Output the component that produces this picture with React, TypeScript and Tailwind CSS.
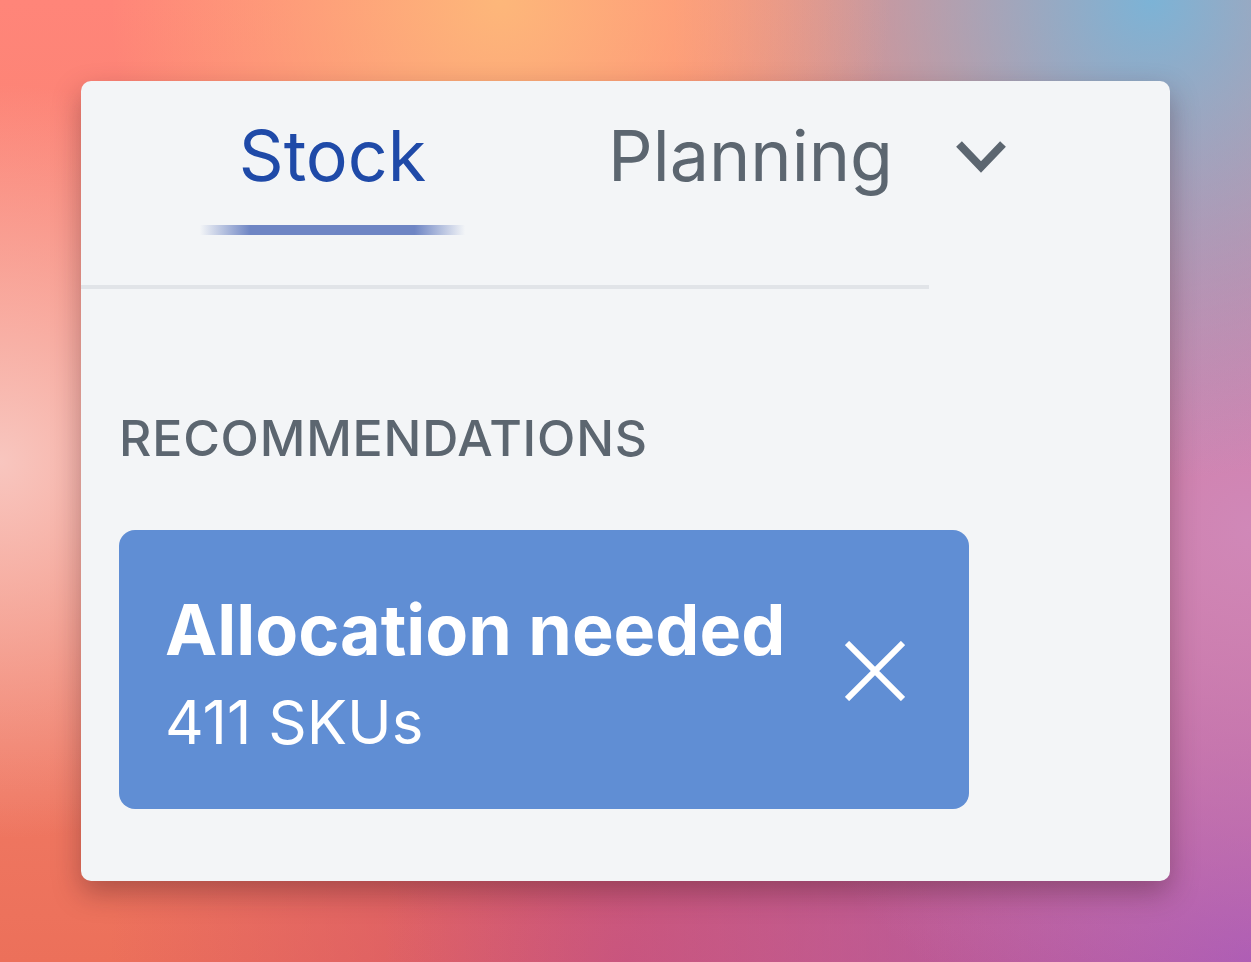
import React from "react";

function Chevron() {
  return (
    <svg width="52" height="34" viewBox="0 0 52 34" fill="none" aria-hidden>
      <path d="M4 4 L26 27 L48 4" stroke="#5c6670" strokeWidth="8" />
    </svg>
  );
}

function CloseIcon() {
  return (
    <svg width="60" height="60" viewBox="0 0 60 60" fill="none" aria-hidden>
      <path d="M2 2 L58 58 M58 2 L2 58" stroke="#ffffff" strokeWidth="6" />
    </svg>
  );
}

export default function App() {
  return (
    <div
      className="w-[1251px] h-[962px] overflow-hidden pt-[81px] pl-[81px] bg-[radial-gradient(circle_at_40%_0%,#fdb77a_0,transparent_32%),radial-gradient(circle_at_92%_0%,#7cb3d6_0,transparent_32%),radial-gradient(circle_at_0%_48%,#f8c6bf_0,transparent_28%),radial-gradient(circle_at_100%_55%,#d088b8_0,transparent_40%),radial-gradient(circle_at_100%_100%,#a653b4_0,transparent_55%),radial-gradient(circle_at_50%_100%,#d6566a_0,transparent_45%),linear-gradient(180deg,#ff8579_0%,#f3806a_60%,#ec705a_100%)]"
      style={{ fontFamily: "Inter, 'Noto Sans', sans-serif" }}
    >
      <div className="w-[1089px] h-[800px] rounded-[10px] bg-[#f3f5f7] shadow-[0_12px_28px_rgba(60,20,30,0.35)]">
        {/* Tabs */}
        <div className="w-[848px] border-b-4 border-[#e1e4e8]">
          <div className="flex items-start pl-[119px] pt-[40px]">
            <div className="w-[265px] flex flex-col items-center">
              <span className="text-[70px] leading-[70px] text-[#1f4aa8]">Stock</span>
              <div className="mt-[34px] h-[10px] w-[265px] bg-[linear-gradient(90deg,rgba(110,133,196,0)_0%,#6e85c4_19%,#6e85c4_81%,rgba(110,133,196,0)_100%)]" />
            </div>
            <span className="ml-[143px] text-[70px] leading-[70px] text-[#5c6670]">Planning</span>
            <div className="ml-[62px] mt-[19px]">
              <Chevron />
            </div>
          </div>
          <div className="h-[50px]" />
        </div>

        {/* Recommendations */}
        <div className="px-[38px] pt-[124px]">
          <h2 className="text-[50px] leading-[50px] font-medium tracking-[0.8px] text-[#5c6670] uppercase">
            Recommendations
          </h2>
          <div className="mt-[67px] w-[850px] h-[279px] rounded-[16px] bg-[#608ed4] flex items-start justify-between pl-[46px] pr-[64px] pt-[60px]">
            <div className="flex flex-col text-white">
              <span className="text-[70px] leading-[80px] font-bold">Allocation needed</span>
              <span className="mt-[17px] text-[60px] leading-[70px]">411 SKUs</span>
            </div>
            <div className="mt-[51px]">
              <CloseIcon />
            </div>
          </div>
        </div>
      </div>
    </div>
  );
}
